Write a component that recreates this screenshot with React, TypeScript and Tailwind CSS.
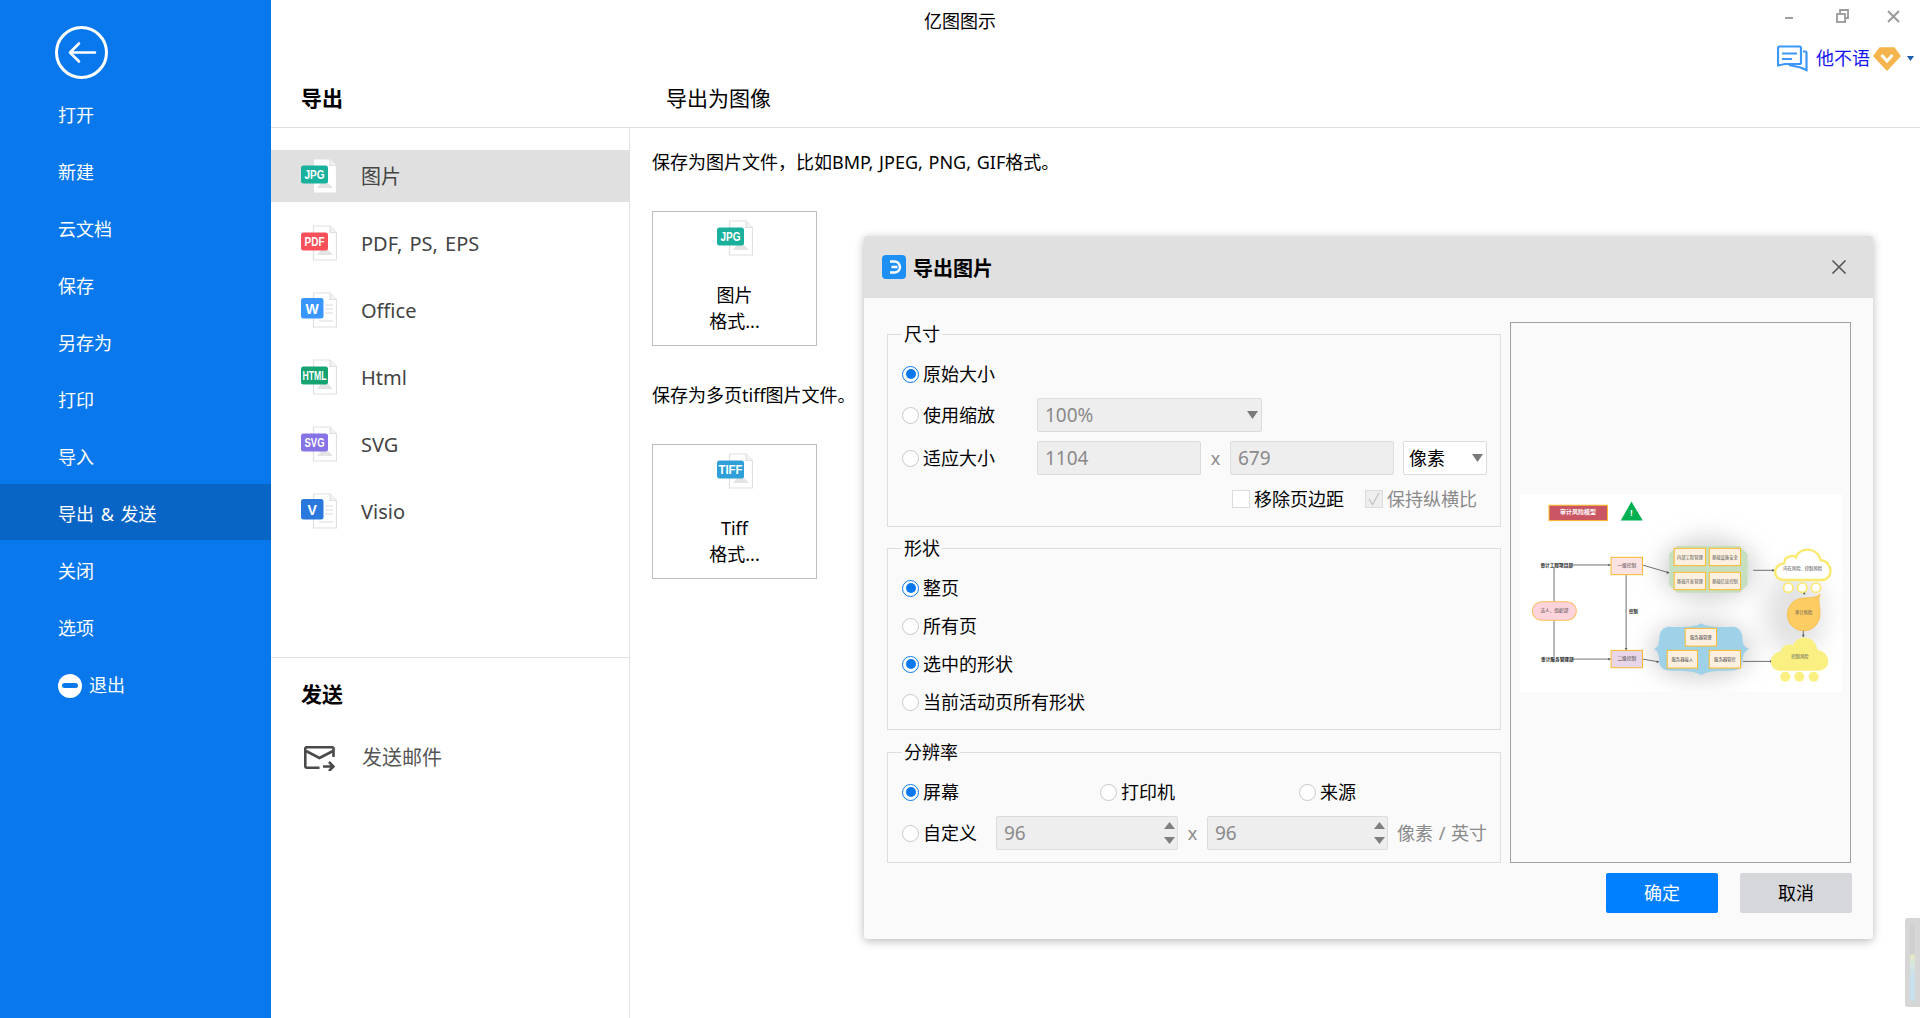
import React from "react";

const menuItems = ["打开", "新建", "云文档", "保存", "另存为", "打印", "导入", "导出 & 发送", "关闭", "选项"];

const exportTypes = [
  { name: "图片", label: "JPG", color: "#19b09c", active: true },
  { name: "PDF, PS, EPS", label: "PDF", color: "#fa5059" },
  { name: "Office", label: "W", color: "#3a96ff", short: true },
  { name: "Html", label: "HTML", color: "#16a372" },
  { name: "SVG", label: "SVG", color: "#8673e6" },
  { name: "Visio", label: "V", color: "#2a78dd", short: true },
];

// small document icon with the coloured format badge
const FileIcon = ({ label, color, short }: { label: string; color: string; short?: boolean }) => (
  <svg width="36" height="36" viewBox="0 0 36 36" className="shrink-0">
    <path d="M12.5 1h16.5l6.5 6.5V35h-23z" fill="#fff" stroke="#e0e0e0" strokeWidth="1.2" />
    <path d="M29 1v6.5h6.5" fill="#f2f2f2" stroke="#e0e0e0" strokeWidth="1.2" />
    {short ? (
      <g stroke="#dcdcdc" strokeWidth="1.2">
        <path d="M24 13h8M24 17h8M24 21h8M18 29h14" />
      </g>
    ) : (
      <path d="M16 30l6-8 5 3 5 5z" fill="#e4e4e4" />
    )}
    {short ? (
      <>
        <rect x="0" y="6" width="22.5" height="20.5" rx="2.5" fill={color} />
        <text x="11.2" y="21.5" textAnchor="middle" fill="#fff" fontSize="14" fontWeight="700" fontFamily="Liberation Sans, sans-serif">
          {label}
        </text>
      </>
    ) : (
      <>
        <rect x="0" y="7.5" width="27" height="18" rx="2.5" fill={color} />
        <text
          x="13.5"
          y="21"
          textAnchor="middle"
          fill="#fff"
          fontSize="12.5"
          fontWeight="700"
          fontFamily="Liberation Sans, sans-serif"
          textLength={label.length > 3 ? 24 : 20}
          lengthAdjust="spacingAndGlyphs"
        >
          {label}
        </text>
      </>
    )}
  </svg>
);

const Radio = ({ checked }: { checked?: boolean }) => (
  <span
    className={`flex h-[17px] w-[17px] shrink-0 items-center justify-center rounded-full border bg-white ${
      checked ? "border-[#0a78ec]" : "border-[#c8c8c8]"
    }`}
  >
    {checked && <span className="h-[10px] w-[10px] rounded-full bg-[#0a78ec]" />}
  </span>
);

const RadioLabel = ({ text, checked }: { text: string; checked?: boolean }) => (
  <span className="flex items-center gap-[4px]">
    <Radio checked={checked} />
    <span className="whitespace-nowrap">{text}</span>
  </span>
);

const Caret = () => (
  <svg width="11" height="8" viewBox="0 0 11 8" className="shrink-0">
    <path d="M0 0h11L5.5 8z" fill="#7a7a7a" />
  </svg>
);

const Field = ({ value, width }: { value: string; width: string }) => (
  <div className={`flex h-[34px] items-center rounded-[2px] border border-[#dcdcdc] bg-[#eeeeee] pl-[7px] text-[19px] text-[#8a8a8a] ${width}`}>
    {value}
  </div>
);

const Spin = ({ value, width }: { value: string; width: string }) => (
  <div className={`flex h-[34px] items-center justify-between rounded-[2px] border border-[#dcdcdc] bg-[#eeeeee] pl-[7px] pr-[2px] text-[19px] text-[#8a8a8a] ${width}`}>
    {value}
    <svg width="11" height="24" viewBox="0 0 11 24">
      <path d="M5.5 1L11 8H0z" fill="#7f7f7f" />
      <path d="M0 16h11l-5.500 7z" fill="#7f7f7f" />
    </svg>
  </div>
);

const Group = ({ title, height, pad, children }: { title: string; height: string; pad: string; children: React.ReactNode }) => (
  <div className={`relative border border-[#dedede] pl-[14px] ${height} ${pad}`}>
    <span className="absolute -top-[14px] left-[14px] bg-[#fafafa] px-[2px] leading-[26px]">{title}</span>
    {children}
  </div>
);

// thumbnail of the diagram being exported
const Preview = () => (
  <svg width="322" height="198" viewBox="58 43 965 592" className="bg-white">
    <defs>
      <filter id="soft" x="-60%" y="-60%" width="220%" height="220%">
        <feGaussianBlur stdDeviation="36" />
      </filter>
    </defs>
    <g filter="url(#soft)" fill="#cfcfcf">
      <ellipse cx="622" cy="268" rx="140" ry="90" />
      <ellipse cx="600" cy="510" rx="150" ry="85" />
      <ellipse cx="880" cy="400" rx="90" ry="130" fill="#e2e2e2" />
    </g>
    <rect x="145" y="76" width="175" height="46" fill="#c95662" stroke="#fdb92c" strokeWidth="3" />
    <text x="232" y="103" textAnchor="middle" fontSize="18" fill="#fff" fontWeight="700">审计风险模型</text>
    <path d="M392 65L426 122H360z" fill="#00b050" />
    <text x="392" y="109" textAnchor="middle" fontSize="24" fill="#fff" fontWeight="700">!</text>

    <g stroke="#555" strokeWidth="2.5" fill="none">
      <path d="M160 262V365M160 421V530M215 255H326M215 537H326M376 284V506M425 255L503 278M425 537L472 545M757 271H817M726 544H810M910 342V337M907 450V468" />
    </g>
    <g fill="#555">
      <path d="M331 255l-8-4v8zM331 537l-8-4v8zM376 512l-4-8h8zM507 279l-8-6-2 8zM476 546l-8-5-1 8zM822 271l-8-4v8zM815 544l-8-4v8zM910 335l-4 8h8zM907 472l-4-8h8z" />
    </g>
    <text x="168" y="260" textAnchor="middle" fontSize="14" fontWeight="700" fill="#222">审计工程项目部</text>
    <text x="170" y="542" textAnchor="middle" fontSize="14" fontWeight="700" fill="#222">审计服务管理部</text>
    <rect x="95" y="365" width="132" height="56" rx="28" fill="#ffd3dc" stroke="#fbbf5c" strokeWidth="3" />
    <text x="161" y="396" textAnchor="middle" fontSize="14" fill="#444">法人、组织部</text>
    <rect x="331" y="232" width="94" height="52" fill="#fde2e4" stroke="#fdb92c" strokeWidth="3" />
    <text x="378" y="262" textAnchor="middle" fontSize="14" fill="#444">一级控制</text>
    <rect x="331" y="511" width="94" height="52" fill="#e8d5e8" stroke="#fdb92c" strokeWidth="3" />
    <text x="378" y="541" textAnchor="middle" fontSize="14" fill="#444">二级控制</text>
    <rect x="384" y="384" width="30" height="20" fill="#fff" />
    <text x="398" y="399" textAnchor="middle" fontSize="13" fontWeight="700" fill="#222">控制</text>

    <polygon points="530,198 715,198 740,222 740,315 715,338 530,338 505,315 505,222" fill="#c5dfc0" />
    {[
      [520, 205, "内部工程管理"],
      [625, 205, "基础设施安全"],
      [520, 277, "基础开发管理"],
      [625, 277, "基础信息控制"],
    ].map(([x, y, t]) => (
      <g key={String(t)}>
        <rect x={x as number} y={y as number} width="94" height="52" fill="#fdf0e0" stroke="#fdb92c" strokeWidth="3" />
        <text x={(x as number) + 47} y={(y as number) + 31} textAnchor="middle" fontSize="13" fill="#555">{t}</text>
      </g>
    ))}

    <path
      d="M500 440Q580 445 601 430Q622 445 700 440Q725 445 725 480Q725 500 745 507Q725 515 725 540Q725 572 690 572Q622 570 601 585Q580 570 510 572Q475 572 475 540Q475 515 460 507Q475 500 475 480Q475 445 500 440z"
      fill="#9fd2e8"
    />
    {[
      [553, 445, 94, "服务器管理"],
      [499, 511, 91, "服务器接入"],
      [625, 511, 94, "服务器管控"],
    ].map(([x, y, w, t]) => (
      <g key={String(t)}>
        <rect x={x as number} y={y as number} width={w as number} height="53" fill="#fdf0e0" stroke="#fdb92c" strokeWidth="3" />
        <text x={(x as number) + (w as number) / 2} y={(y as number) + 31} textAnchor="middle" fontSize="13" fill="#444">{t}</text>
      </g>
    ))}

    <path d="M850 300C815 300 812 255 850 250C850 225 880 225 885 232C895 200 950 200 958 240C997 245 1000 300 960 300z" fill="#fff" stroke="#fbe96f" strokeWidth="7" />
    <text x="905" y="270" textAnchor="middle" fontSize="13" fill="#444">内在风险、控制风险</text>
    {[862, 904, 945].map((x) => (
      <circle key={x} cx={x} cy="323" r="14" fill="#fff" stroke="#fbe96f" strokeWidth="5" />
    ))}
    <path d="M957 342C950 365 957 370 957 400A49 49 0 1 1 900 355C925 352 945 355 957 342z" fill="#fdcc63" stroke="#f9b43a" strokeWidth="2" />
    <text x="908" y="401" textAnchor="middle" fontSize="13" fill="#555">审计风险</text>
    <path d="M840 572C800 572 800 520 838 515C845 490 870 490 875 497C890 462 940 462 950 510C990 515 995 572 950 572z" fill="#faf082" />
    <text x="897" y="533" textAnchor="middle" fontSize="13" fill="#555">控制风险</text>
    {[853, 895, 938].map((x) => (
      <circle key={x} cx={x} cy="590" r="15" fill="#faf082" />
    ))}
  </svg>
);

const App = () => {
  return (
    <div className="relative flex h-[1018px] w-[1920px] overflow-hidden bg-white font-['Noto_Sans','Noto_Sans_CJK_SC',sans-serif] text-[18px] text-black">
      {/* blue backstage menu */}
      <aside className="flex w-[271px] shrink-0 flex-col bg-[#0978ec] text-white">
        <div className="h-[85px] pl-[55px] pt-[26px]">
          <svg width="53" height="53" viewBox="0 0 53 53" fill="none" stroke="#fff">
            <circle cx="26.5" cy="26.500" r="25" strokeWidth="3" />
            <path d="M15 26.500H40M24 17.500L15 26.500L24 35.500" strokeWidth="2.600" strokeLinecap="round" strokeLinejoin="round" />
          </svg>
        </div>
        <nav className="flex flex-col gap-px">
          {menuItems.map((item) => (
            <div
              key={item}
              className={`flex h-14 items-center pl-[58px] pt-[5px] [word-spacing:2px] ${item.startsWith("导出") ? "bg-[#0864c5]" : ""}`}
            >
              {item}
            </div>
          ))}
          <div className="flex h-14 items-center gap-[7px] pl-[58px] pt-[5px]">
            <span className="flex h-6 w-6 items-center justify-center rounded-full bg-white">
              <span className="h-[5px] w-4 rounded-full bg-[#0978ec]" />
            </span>
            退出
          </div>
        </nav>
      </aside>

      <main className="flex min-w-0 flex-1 flex-col">
        <header className="flex h-[128px] shrink-0 items-end border-b border-[#e0e0e0] pb-[15px] text-[21px] leading-[28px]">
          <div className="w-[395px] pl-[30px] font-bold">导出</div>
          <div>导出为图像</div>
        </header>

        <div className="flex flex-1">
          <section className="flex w-[359px] shrink-0 flex-col border-r border-[#e0e0e0]">
            <div className="flex h-[530px] flex-col gap-[15px] border-b border-[#e0e0e0] pt-[22px] text-[20px] text-[#444]">
              {exportTypes.map((t) => (
                <div
                  key={t.name}
                  className={`flex h-[52px] items-center gap-[25px] pl-[30px] ${t.active ? "bg-[#e0e0e0]" : ""}`}
                >
                  <FileIcon label={t.label} color={t.color} short={t.short} />
                  <span className="-ml-px pt-[2px] [word-spacing:2px]">{t.name}</span>
                </div>
              ))}
            </div>
            <div className="pl-[30px] pt-[22px] text-[21px] leading-[28px] font-bold">发送</div>
            <div className="flex items-center gap-[27px] pl-[33px] pt-[35px] text-[20px] text-[#555]">
              <svg width="31" height="25" viewBox="0 0 31 25" fill="none" stroke="#4a4a4a" strokeWidth="2.600" className="shrink-0">
                <path d="M29.500 11V2.500a1.200 1.200 0 0 0-1.200-1.200H2.500a1.200 1.200 0 0 0-1.200 1.200v18a1.200 1.200 0 0 0 1.200 1.200h13" />
                <path d="M2 5l13.500 7L29 5" />
                <path d="M19 20.500h10.500M25 16l4.500 4.500L25 25" />
              </svg>
              发送邮件
            </div>
          </section>

          <section className="pl-[22px] pt-[20px] leading-[28px]">
            <p className="whitespace-nowrap [word-spacing:1px]">保存为图片文件，比如BMP, JPEG, PNG, GIF格式。</p>
            <div className="mt-[35px] flex h-[135px] w-[165px] flex-col items-center border border-[#bdbdbd] pt-[8px] leading-[26px]">
              <div className="pl-[1px]">
                <FileIcon label="JPG" color="#19b09c" />
              </div>
              <span className="mt-[26px]">图片</span>
              <span>格式...</span>
            </div>
            <p className="mt-[35px] whitespace-nowrap">保存为多页tiff图片文件。</p>
            <div className="mt-[35px] flex h-[135px] w-[165px] flex-col items-center border border-[#bdbdbd] pt-[8px] leading-[26px]">
              <div className="pl-[1px]">
                <FileIcon label="TIFF" color="#2e9fd8" />
              </div>
              <span className="mt-[26px]">Tiff</span>
              <span>格式...</span>
            </div>
          </section>
        </div>
      </main>

      {/* app title and window chrome, on top of the page */}
      <div className="absolute left-0 right-0 top-[8px] text-center leading-[26px]">亿图图示</div>
      <div className="absolute right-[20px] top-[9px] flex items-center">
        <span className="mr-[43px] mt-[3px] h-[2px] w-2 bg-[#a0a0a0]" />
        <svg width="13" height="14" viewBox="0 0 13 14" fill="none" stroke="#9a9a9a" strokeWidth="1.800" className="mr-[38px]">
          <rect x="1" y="5" width="8" height="8" />
          <path d="M4 4.500V1h8v8H9.500" />
        </svg>
        <svg width="13" height="13" viewBox="0 0 13 13" stroke="#9a9a9a" strokeWidth="2">
          <path d="M1 1l11 11M12 1L1 12" />
        </svg>
      </div>
      <div className="absolute right-[6px] top-[45px] flex items-center text-[#1414f0]">
        <svg width="31" height="27" viewBox="0 0 31 27" fill="none" stroke="#3d97f6" strokeWidth="2.200" className="mr-[8px]">
          <path d="M2.500 1.500h20a1.500 1.500 0 0 1 1.500 1.500v14.500a1.500 1.500 0 0 1-1.500 1.500H8L1 20.500V3a1.500 1.500 0 0 1 1.500-1.500z" />
          <path d="M26 6.500h2.500a1 1 0 0 1 1 1V25l-6-2.500L12 20" />
          <path d="M5 8.500h15M5 14h10" />
        </svg>
        他不语
        <svg width="28" height="24" viewBox="0 0 28 24" className="ml-[3px]">
          <path d="M7 1h14l6 8L14 23 1 9z" fill="#f6b44e" stroke="#f6b44e" strokeWidth="1.500" strokeLinejoin="round" />
          <path d="M8.500 8l5.500 6 5.500-6" fill="none" stroke="#fff" strokeWidth="3" />
        </svg>
        <svg width="7" height="5" viewBox="0 0 7 5" className="ml-[6px]">
          <path d="M0 0h7L3.500 5z" fill="#1d5fb0" />
        </svg>
      </div>

      {/* export dialog */}
      <div className="absolute left-[864px] top-[236px] flex h-[703px] w-[1009px] flex-col rounded-[3px] bg-[#fafafa] shadow-[0_2px_10px_rgba(0,0,0,0.28)]">
        <div className="flex h-[62px] shrink-0 items-center justify-between rounded-t-[3px] bg-[#e0e0e0] pl-[18px] pr-[26px]">
          <div className="flex items-center gap-[7px] text-[20px] font-bold">
            <svg width="24" height="24" viewBox="0 0 24 24" fill="none">
              <rect width="24" height="24" rx="4" fill="#1e90f5" />
              <path d="M8 6.500h4.500a5.500 5.500 0 0 1 0 11H8M9.500 12h6" stroke="#fff" strokeWidth="2.400" />
            </svg>
            <span className="pt-[3px]">导出图片</span>
          </div>
          <svg width="16" height="16" viewBox="0 0 16 16" stroke="#555" strokeWidth="1.600">
            <path d="M1.500 1.500l13 13M14.500 1.500l-13 13" />
          </svg>
        </div>

        <div className="flex pl-[23px] pt-[24px]">
          <div className="flex w-[614px] shrink-0 flex-col gap-[21px] pt-[12px]">
            <Group title="尺寸" height="h-[193px]" pad="pt-[22px]">
              <div className="flex h-[34px] items-center">
                <RadioLabel text="原始大小" checked />
              </div>
              <div className="mt-[7px] flex h-[34px] items-center">
                <div className="w-[135px]">
                  <RadioLabel text="使用缩放" />
                </div>
                <div className="flex h-[34px] w-[225px] items-center justify-between rounded-[2px] border border-[#dcdcdc] bg-[#eeeeee] pl-[7px] pr-[3px] text-[19px] text-[#8a8a8a]">
                  100%
                  <Caret />
                </div>
              </div>
              <div className="mt-[9px] flex h-[34px] items-center">
                <div className="w-[135px]">
                  <RadioLabel text="适应大小" />
                </div>
                <Field value="1104" width="w-[164px]" />
                <span className="w-[29px] text-center text-[#8a8a8a]">x</span>
                <Field value="679" width="w-[164px]" />
                <div className="ml-[9px] flex h-[34px] w-[84px] items-center justify-between rounded-[2px] border border-[#dcdcdc] bg-white pl-[5px] pr-[3px]">
                  像素
                  <Caret />
                </div>
              </div>
              <div className="mt-[15px] flex h-[18px] items-center pl-[330px]">
                <span className="mr-[4px] h-[18px] w-[18px] border border-[#dcdcdc] bg-white" />
                <span className="w-[91px] whitespace-nowrap">移除页边距</span>
                <span className="ml-[20px] mr-[4px] flex h-[18px] w-[18px] items-center justify-center border border-[#dcdcdc] bg-[#eeeeee]">
                  <svg width="14" height="14" viewBox="0 0 14 14" fill="none" stroke="#c0c0c0" strokeWidth="1.200">
                    <path d="M2 7l3.500 5.500L12 1" />
                  </svg>
                </span>
                <span className="whitespace-nowrap text-[#8a8a8a]">保持纵横比</span>
              </div>
            </Group>

            <Group title="形状" height="h-[182px]" pad="pt-[20px]">
              {["整页", "所有页", "选中的形状", "当前活动页所有形状"].map((t, i) => (
                <div key={t} className="flex h-[38px] items-center">
                  <RadioLabel text={t} checked={i === 0 || i === 2} />
                </div>
              ))}
            </Group>

            <div className="mt-px">
              <Group title="分辨率" height="h-[111px]" pad="pt-[22px]">
                <div className="flex h-[34px] items-center">
                  <div className="w-[198px]">
                    <RadioLabel text="屏幕" checked />
                  </div>
                  <div className="w-[199px]">
                    <RadioLabel text="打印机" />
                  </div>
                  <RadioLabel text="来源" />
                </div>
                <div className="mt-[7px] flex h-[34px] items-center">
                  <div className="w-[94px]">
                    <RadioLabel text="自定义" />
                  </div>
                  <Spin value="96" width="w-[182px]" />
                  <span className="w-[29px] text-center text-[#8a8a8a]">x</span>
                  <Spin value="96" width="w-[181px]" />
                  <span className="ml-[9px] whitespace-nowrap text-[#8a8a8a] [word-spacing:1px]">像素 / 英寸</span>
                </div>
              </Group>
            </div>
          </div>
          <div className="ml-[9px] flex h-[541px] w-[341px] items-center justify-center border border-[#a0a0a0]">
            <Preview />
          </div>
        </div>

        <div className="mt-[10px] flex justify-end gap-[22px] pr-[21px]">
          <button className="h-10 w-28 rounded-[2px] bg-[#0080ff] text-white">确定</button>
          <button className="h-10 w-28 rounded-[2px] bg-[#d6d7db]">取消</button>
        </div>
      </div>

      {/* little floating widget at the screen edge */}
      <div className="absolute right-0 top-[918px] flex h-[89px] w-[15px] justify-center rounded-l-[3px] bg-[#d6d6d6] pt-[7px]">
        <div className="h-[76px] w-[5px] bg-[linear-gradient(#cfcfcf_0%,#cfcfcf_38%,#e4e8c0_40%,#d8e6dc_50%,#c6e0ee_70%,#c6e0ee_100%)]" />
      </div>
    </div>
  );
};

export default App;
